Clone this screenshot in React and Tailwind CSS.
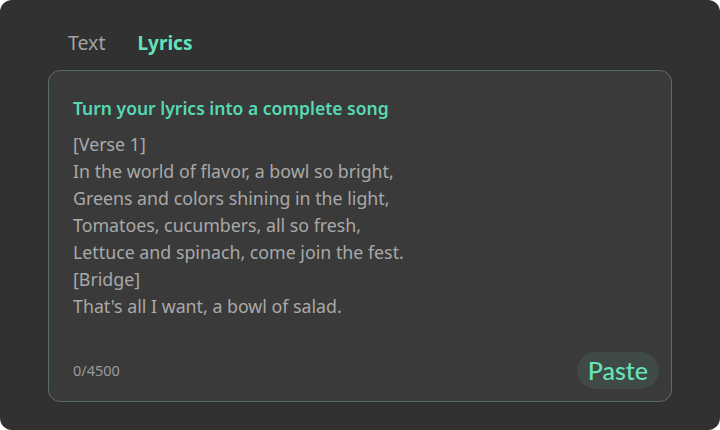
export default function App() {
  const lines = [
    "[Verse 1]",
    "In the world of flavor, a bowl so bright,",
    "Greens and colors shining in the light,",
    "Tomatoes, cucumbers, all so fresh,",
    "Lettuce and spinach, come join the fest.",
    "[Bridge]",
    "That's all I want, a bowl of salad.",
  ];
  return (
    <div className="w-[720px] h-[430px] bg-white">
      <div
        className="w-full h-full rounded-[12px] bg-[#313131] px-[48px] pt-[29px] flex flex-col"
        style={{ fontFamily: '"Noto Sans", "Open Sans", sans-serif' }}
      >
        <div className="flex items-center gap-[32px] pl-[20px] h-[28px]">
          <span className="text-[19.5px] text-[#a3a3a3]">Text</span>
          <span className="text-[19px] font-bold text-[#62e3bd]">Lyrics</span>
        </div>
        <div className="mt-[13px] h-[332px] rounded-[12px] border border-[#5a6d62] bg-[#3a3a3a] px-[24px] pt-[24px] pb-[12px] flex flex-col">
          <div className="text-[17.5px] font-semibold text-[#55d9b3] leading-[26px]">
            Turn your lyrics into a complete song
          </div>
          <div className="mt-[10px] text-[17.8px] text-[#a9a9a9] leading-[27px]">
            {lines.map((l) => (
              <div key={l}>{l}</div>
            ))}
          </div>
          <div className="mt-auto flex items-center justify-between">
            <span className="text-[14.5px] text-[#9a9a9a]">0/4500</span>
            <button
              className="h-[37px] px-[11px] rounded-full bg-[#3f4945] text-[25px] font-medium leading-none text-[#66e4b8] -mr-[12px]"
              style={{ fontFamily: '"Lato", sans-serif' }}
            >
              Paste
            </button>
          </div>
        </div>
      </div>
    </div>
  );
}
